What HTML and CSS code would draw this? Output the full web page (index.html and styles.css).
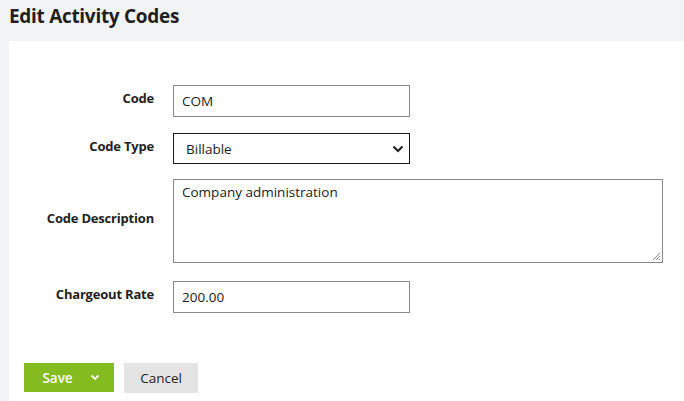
FILE: index.html
```html
<!DOCTYPE html>
<html>
<head>
<meta charset="utf-8">
<link rel="stylesheet" href="styles.css">
</head>
<body>
<h1 class="page-title">Edit Activity Codes</h1>
<div class="panel">
  <form class="form">
    <div class="row">
      <label class="label">Code</label>
      <input class="input short" type="text" value="COM">
    </div>
    <div class="row row-select">
      <label class="label">Code Type</label>
      <div class="select">
        <span>Billable</span>
        <svg class="chev" width="12" height="8" viewBox="0 0 12 8"><path d="M1.5 1.5 L6 6 L10.5 1.5" fill="none" stroke="#222" stroke-width="2.2"/></svg>
      </div>
    </div>
    <div class="row row-area">
      <label class="label">Code Description</label>
      <div class="textarea">Company administration
        <svg class="grip" width="9" height="9" viewBox="0 0 9 9"><path d="M8 1 L1 8 M8 4 L4 8 M8 7 L7 8" stroke="#888" stroke-width="1"/></svg>
      </div>
    </div>
    <div class="row">
      <label class="label">Chargeout Rate</label>
      <input class="input short" type="text" value="200.00">
    </div>
  </form>
  <div class="actions">
    <button class="btn btn-save" type="button">Save
      <svg width="10" height="7" viewBox="0 0 10 7"><path d="M1.5 1.5 L5 5 L8.5 1.5" fill="none" stroke="#fff" stroke-width="1.8"/></svg>
    </button>
    <button class="btn btn-cancel" type="button">Cancel</button>
  </div>
</div>
</body>
</html>
```
FILE: styles.css
```css
* { box-sizing: border-box; }
html, body { margin: 0; padding: 0; }
body {
  background: #f2f3f5;
  font-family: "Open Sans", "Noto Sans", sans-serif;
  color: #222;
  height: 401px;
  overflow: hidden;
}
.page-title {
  margin: 0;
  padding: 3px 9px 0;
  height: 41px;
  font-size: 19px;
  font-weight: 700;
  color: #1f1f1f;
  letter-spacing: -0.3px;
}
.panel {
  margin-left: 9px;
  background: #fff;
  height: 360px;
  padding-top: 44px;
}
.form {
  display: flex;
  flex-direction: column;
}
.row {
  display: grid;
  grid-template-columns: 145px 490px;
  column-gap: 19px;
  align-items: center;
  margin-bottom: 16px;
}
.row-select { margin-bottom: 15px; }
.row-area { margin-bottom: 18px; }
.label {
  text-align: right;
  font-weight: 700;
  font-size: 13px;
  color: #222;
  letter-spacing: -0.2px;
  position: relative;
  top: -3px;
}
.input {
  font-family: inherit;
  font-size: 13.5px;
  color: #222;
  height: 32px;
  border: 1px solid #8a8a8a;
  border-radius: 0;
  padding: 0 8px;
  outline: none;
}
.short { width: 237px; }
.select {
  width: 237px;
  height: 31px;
  border: 1px solid #1a1a1a;
  display: flex;
  align-items: center;
  justify-content: space-between;
  padding: 0 5px 0 12px;
  font-size: 13.5px;
}
.chev { margin-top: 1px; }
.textarea {
  position: relative;
  width: 490px;
  height: 84px;
  border: 1px solid #8a8a8a;
  padding: 3px 8px;
  font-size: 13.5px;
}
.grip {
  position: absolute;
  right: 1px;
  bottom: 1px;
}
.actions {
  display: flex;
  gap: 10px;
  margin-top: 34px;
  padding-left: 15px;
  align-items: flex-start;
}
.btn {
  font-family: inherit;
  font-size: 13.5px;
  border: 0;
  border-radius: 0;
  height: 29px;
  padding: 0;
  display: flex;
  align-items: center;
  justify-content: center;
}
.btn-save {
  width: 90px;
  background: #84bc20;
  color: #fff;
  font-weight: 600;
  gap: 17px;
  padding-left: 4px;
}
.btn-cancel {
  width: 74px;
  height: 30px;
  background: #e4e4e4;
  color: #222;
}
```
